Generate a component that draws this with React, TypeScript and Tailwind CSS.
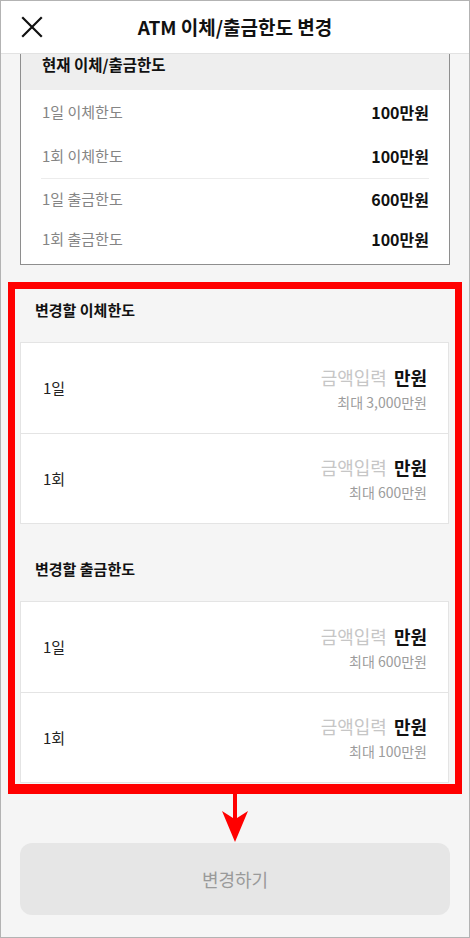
import React from 'react';

const font = { fontFamily: '"Noto Sans CJK KR", "Noto Sans", sans-serif' };

const currentLimits = [
  [
    { label: '1일 이체한도', value: '100만원' },
    { label: '1회 이체한도', value: '100만원' },
  ],
  [
    { label: '1일 출금한도', value: '600만원' },
    { label: '1회 출금한도', value: '100만원' },
  ],
];

const sections = [
  {
    title: '변경할 이체한도',
    pad: 'pt-[10px]',
    rows: [
      { label: '1일', max: '최대 3,000만원' },
      { label: '1회', max: '최대 600만원' },
    ],
  },
  {
    title: '변경할 출금한도',
    pad: 'pt-[34px]',
    rows: [
      { label: '1일', max: '최대 600만원' },
      { label: '1회', max: '최대 100만원' },
    ],
  },
];

const CloseIcon = () => (
  <svg width="22" height="22" viewBox="0 0 22 22" fill="none">
    <path d="M2 2 L20 20 M20 2 L2 20" stroke="#111" strokeWidth="2.2" strokeLinecap="square" />
  </svg>
);

const InputRow = ({ label, max, first }: { label: string; max: string; first: boolean }) => (
  <div className={`h-[90px] flex items-center justify-between pl-[22px] pr-[21px] ${first ? '' : 'border-t border-[#e4e4e4]'}`}>
    <span className="text-[15px] leading-[22px] text-[#222]">{label}</span>
    <div className="flex flex-col items-end">
      <div className="text-[18px] leading-[24px]">
        <span className="text-[#c6c6c6]">금액입력</span>
        <span className="ml-[7px] font-bold text-[#111]">만원</span>
      </div>
      <span className="mt-[4px] text-[14px] leading-[19px] text-[#9c9c9c]">{max}</span>
    </div>
  </div>
);

const App: React.FC = () => {
  return (
    <div style={font} className="w-[470px] h-[938px] border border-[#b3b3b3] bg-[#f5f5f5] flex flex-col overflow-hidden">
      {/* 상단 헤더 */}
      <header className="h-[53px] shrink-0 bg-white border-b border-[#e2e2e2] relative flex items-center justify-center">
        <button className="absolute left-[20px] top-[15px]">
          <CloseIcon />
        </button>
        <h1 className="text-[19px] leading-[26px] font-bold text-[#111]">ATM 이체/출금한도 변경</h1>
      </header>

      {/* 현재 한도 */}
      <div className="mx-[19px] border-x border-b border-[#8e8e8e] bg-white">
        <div className="h-[36px] bg-[#eeeeee] pl-[21px]">
          <p className="text-[15.5px] leading-[20px] font-bold text-[#111]">현재 이체/출금한도</p>
        </div>
        <div className="px-[20px] pb-[5px]">
          {currentLimits.map((group, gi) => (
            <div key={gi} className={gi > 0 ? 'border-t border-[#ececec]' : ''}>
              {group.map((item) => (
                <div key={item.label} className={`${gi === 0 ? 'h-[44px]' : 'h-[40px]'} flex items-center justify-between pl-[1px]`}>
                  <span className="text-[15px] leading-[22px] text-[#858585]">{item.label}</span>
                  <span className="text-[16px] leading-[22px] font-bold text-[#111]">{item.value}</span>
                </div>
              ))}
            </div>
          ))}
        </div>
      </div>

      {/* 변경할 한도 (빨간 강조 박스) */}
      <div className="mt-[17px] ml-[7px] w-[454px] border-[7px] border-b-[10px] border-[#ff0000] pl-[5px] pr-[6px] pb-[1px]">
        {sections.map((section) => (
          <section key={section.title} className={section.pad}>
            <div className="h-[43px] pl-[15px] flex items-start">
              <span className="text-[15px] leading-[22px] font-bold text-[#111]">{section.title}</span>
            </div>
            <div className="bg-white border border-[#e4e4e4]">
              {section.rows.map((row, i) => (
                <InputRow key={row.label} label={row.label} max={row.max} first={i === 0} />
              ))}
            </div>
          </section>
        ))}
      </div>

      {/* 화살표 */}
      <div className="h-[49px] shrink-0 flex justify-center">
        <svg width="30" height="49" viewBox="0 0 30 49">
          <path d="M13 0 L17 0 L17 24 L28 17 L15 48 L2 17 L13 24 Z" fill="#ff0000" />
        </svg>
      </div>

      <button className="mx-[19px] h-[72px] shrink-0 rounded-[12px] bg-[#e6e6e6] text-[18px] leading-[26px] text-[#9a9a9a]">
        변경하기
      </button>
    </div>
  );
};

export default App;
